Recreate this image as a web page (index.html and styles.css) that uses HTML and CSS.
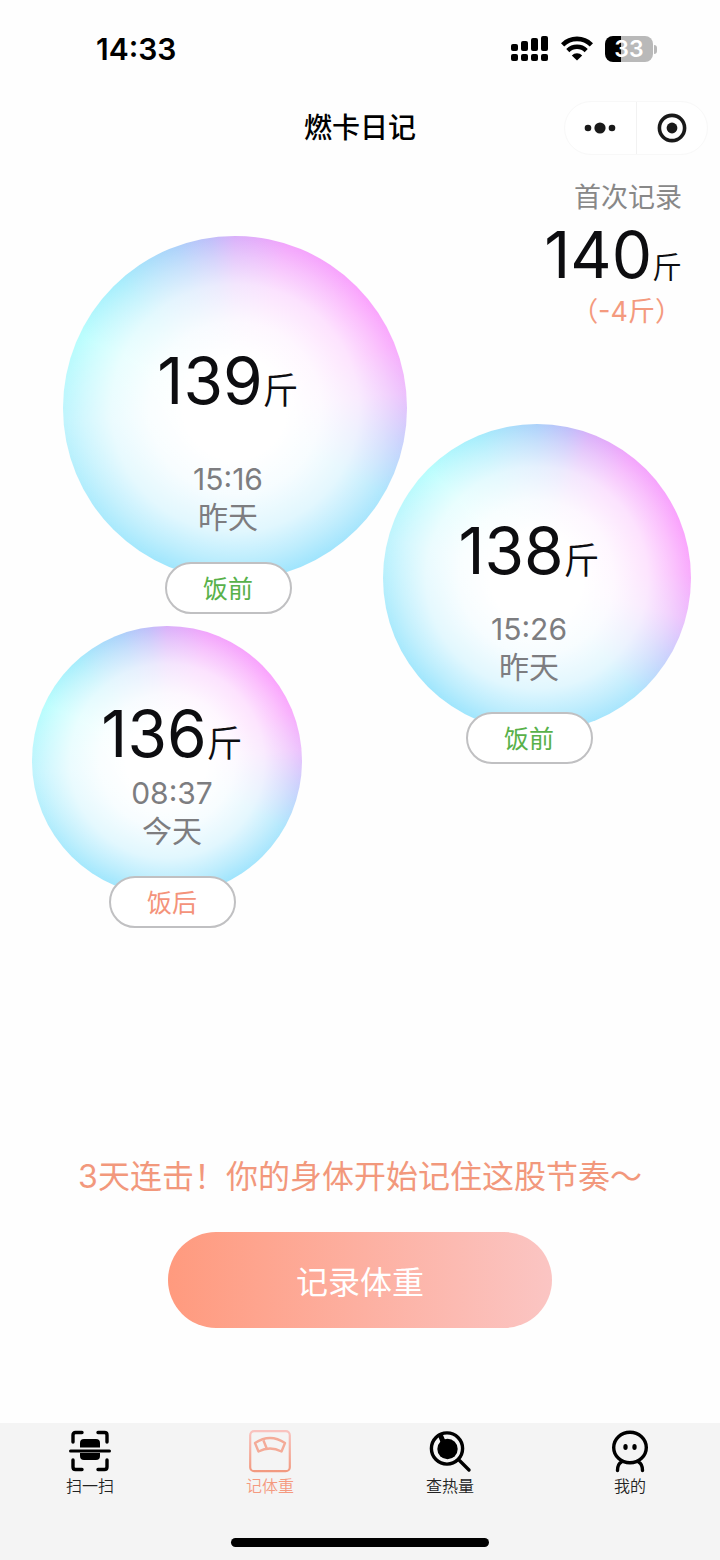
FILE: index.html
```html
<!DOCTYPE html>
<html lang="zh-CN">
<head>
    <meta charset="UTF-8">
    <meta name="viewport" content="width=device-width, initial-scale=1.0">
    <title>燃卡日记</title>
    <link rel="stylesheet" href="styles.css">
</head>
<body>

    <div class="status-bar">
        <span class="clock">14:33</span>
        <div class="status-icons">
            <svg width="38" height="26" viewBox="0 0 38 26">
                <rect x="0" y="8" width="7" height="7" rx="2"/>
                <rect x="10" y="5" width="7" height="10" rx="2"/>
                <rect x="20" y="2" width="7" height="13" rx="2"/>
                <rect x="30" y="0" width="7" height="15" rx="2"/>
                <rect x="0" y="18" width="7" height="7" rx="2"/>
                <rect x="10" y="18" width="7" height="7" rx="2"/>
                <rect x="20" y="18" width="7" height="7" rx="2"/>
                <rect x="30" y="18" width="7" height="7" rx="2"/>
            </svg>
            <svg width="32" height="26" viewBox="0 0 32 26">
                <path d="M1.600 8.800a20.500 20.500 0 0 1 28.800 0" fill="none" stroke="#000" stroke-width="4.6"/>
                <path d="M6.800 14.600a13 13 0 0 1 18.400 0" fill="none" stroke="#000" stroke-width="4.4"/>
                <path d="M16 24.400l-5.200-5a7.400 7.400 0 0 1 10.400 0z"/>
            </svg>
            <div class="battery"><span>33</span></div>
        </div>
    </div>

    <header class="nav-bar">
        <h1>燃卡日记</h1>
        <div class="capsule">
            <button type="button" aria-label="更多">
                <svg width="32" height="30" viewBox="0 0 32 30">
                    <circle cx="4" cy="15" r="3.3"/>
                    <circle cx="16" cy="15" r="5.6"/>
                    <circle cx="28" cy="15" r="3.3"/>
                </svg>
            </button>
            <button type="button" aria-label="关闭">
                <svg width="30" height="30" viewBox="0 0 30 30">
                    <circle cx="15" cy="15" r="12.6" fill="none" stroke="#191919" stroke-width="3.6"/>
                    <circle cx="15" cy="15" r="5.4"/>
                </svg>
            </button>
        </div>
    </header>

    <main class="board">
        <section class="first-record">
            <p class="label">首次记录</p>
            <p class="weight">140<small>斤</small></p>
            <p class="diff">（-4斤）</p>
        </section>

        <article class="entry large">
            <div class="ball"></div>
            <p class="weight">139<small>斤</small></p>
            <p class="when">15:16<br>昨天</p>
            <span class="tag before">饭前</span>
        </article>
        <article class="entry medium">
            <div class="ball"></div>
            <p class="weight">138<small>斤</small></p>
            <p class="when">15:26<br>昨天</p>
            <span class="tag before">饭前</span>
        </article>
        <article class="entry small">
            <div class="ball"></div>
            <p class="weight">136<small>斤</small></p>
            <p class="when">08:37<br>今天</p>
            <span class="tag after">饭后</span>
        </article>
    </main>

    <section class="action">
        <p>3天连击！你的身体开始记住这股节奏～</p>
        <button type="button" class="record-btn">记录体重</button>
    </section>

    <footer class="tab-bar">
        <nav>
            <a href="#scan">
                <svg width="44" height="44" viewBox="0 0 44 44">
                    <g fill="none" stroke="#000" stroke-width="3.4" stroke-linecap="round" stroke-linejoin="round">
                        <path d="M5 13V6q0-2.500 2.500-2.500H14M30 3.500h6.500Q39 3.500 39 6v7M5 31v7q0 2.500 2.500 2.500H14M30 40.500h6.500Q39 40.500 39 38v-7"/>
                        <path d="M2.500 22h39" stroke-width="3"/>
                    </g>
                    <path d="M12 18.400V14q0-4 4-4h12q4 0 4 4v4.400zM12 24h20v3q0 4-4 4H16q-4 0-4-4z"/>
                </svg>
                <span>扫一扫</span>
            </a>
            <a href="#weight" class="active">
                <svg width="44" height="44" viewBox="0 0 44 44">
                    <defs>
                        <linearGradient id="scale" x1="0" y1="0" x2="0" y2="1">
                            <stop offset="0" stop-color="#f9c3bf"/>
                            <stop offset="1" stop-color="#f29a80"/>
                        </linearGradient>
                    </defs>
                    <rect x="2.2" y="2.2" width="39.6" height="40" rx="4" fill="none" stroke="url(#scale)" stroke-width="2.2"/>
                    <path d="M7 14Q22 4 37 14L33.500 22.500Q22 16.500 10.500 22.500zM15.500 11.500l3 7.500" fill="none" stroke="#f4ab98" stroke-width="2.4" stroke-linejoin="round"/>
                </svg>
                <span>记体重</span>
            </a>
            <a href="#calorie">
                <svg width="44" height="44" viewBox="0 0 44 44">
                    <circle cx="19" cy="19.5" r="15.6" fill="none" stroke="#000" stroke-width="3.4"/>
                    <circle cx="19.5" cy="20" r="10.2"/>
                    <path d="M12.500 6.500l2.500 6" fill="none" stroke="#000" stroke-width="5" stroke-linecap="round"/>
                    <path d="M31.500 31.500l9.500 9.500" fill="none" stroke="#000" stroke-width="3.4" stroke-linecap="round"/>
                </svg>
                <span>查热量</span>
            </a>
            <a href="#me">
                <svg width="44" height="44" viewBox="0 0 44 44">
                    <g fill="none" stroke="#000" stroke-width="3.4" stroke-linecap="round">
                        <ellipse cx="22" cy="18.5" rx="16.3" ry="15.3"/>
                        <path d="M13.500 33Q9.500 35 9.500 41.500M30.500 33Q34.500 35 34.500 41.500"/>
                    </g>
                    <ellipse cx="17.5" cy="18" rx="2.2" ry="3"/>
                    <ellipse cx="26.5" cy="18" rx="2.2" ry="3"/>
                </svg>
                <span>我的</span>
            </a>
        </nav>
        <div class="home-indicator"></div>
    </footer>

</body>
</html>
```

FILE: styles.css
```css
* {
    box-sizing: border-box;
}
body {
    margin: 0;
    min-height: 100vh;
    display: flex;
    flex-direction: column;
    background-color: #fefefe;
    color: #0d0d10;
    font-family: Inter, "Noto Sans CJK SC", sans-serif;
}
h1, p {
    margin: 0;
    font-weight: normal;
}
button {
    padding: 0;
    border: none;
    background: none;
    font-family: inherit;
    cursor: pointer;
}

.status-bar {
    height: 98px;
    padding: 0 67px 0 96px;
    display: flex;
    justify-content: space-between;
    align-items: center;
}
.clock {
    font-size: 30px;
    font-weight: 600;
    color: #000;
}
.status-icons {
    display: flex;
    align-items: center;
    gap: 12px;
}
.battery {
    position: relative;
    width: 48px;
    height: 26px;
    border-radius: 8px;
    background: linear-gradient(to right, #000 33%, #b9b9b9 33%);
    color: #fff;
    font-size: 23px;
    font-weight: 600;
    line-height: 26px;
    text-align: center;
}
.battery::after {
    content: "";
    position: absolute;
    right: -4px;
    top: 9px;
    width: 3px;
    height: 9px;
    border-radius: 0 3px 3px 0;
    background-color: #b9b9b9;
}

.nav-bar {
    height: 60px;
    padding: 0 12px;
    display: grid;
    grid-template-columns: 1fr auto 1fr;
    align-items: center;
}
.nav-bar h1 {
    grid-column: 2;
    font-size: 28px;
    font-weight: 500;
    line-height: 40px;
    color: #000;
}
.capsule {
    justify-self: end;
    width: 144px;
    height: 54px;
    display: flex;
    border: 1px solid #f8f8f8;
    border-radius: 27px;
    background-color: #fff;
}
.capsule button {
    flex: 1;
    display: flex;
    justify-content: center;
    align-items: center;
}
.capsule button + button {
    border-left: 1px solid #f2f2f2;
}
.capsule svg {
    fill: #191919;
}

.board {
    position: relative;
    flex: 1;
}
.weight {
    font-size: 64px;
    line-height: 76px;
    white-space: nowrap;
}
.weight small {
    font-size: 36px;
    font-weight: 350;
    line-height: 1;
}
.first-record {
    padding: 21px 38px 0 0;
    text-align: right;
    font-size: 27px;
    line-height: 38px;
}
.first-record .weight small {
    font-size: 30px;
}
.label {
    color: #888;
}
.diff {
    color: #f49a7e;
}

.entry {
    position: absolute;
    display: flex;
    flex-direction: column;
    align-items: center;
    width: 144px;
}
.entry.large {
    left: 156px;
    top: 185px;
    gap: 41px;
}
.entry.medium {
    left: 457px;
    top: 355px;
    gap: 21px;
}
.entry.small {
    left: 100px;
    top: 538px;
    gap: 2px;
}
.entry .weight, .when, .tag {
    position: relative;
}
.ball {
    position: absolute;
    border-radius: 50%;
    background:
        radial-gradient(circle closest-side, #fff 30%, rgba(255, 255, 255, 0.93) 50%, rgba(255, 255, 255, 0.75) 72%, rgba(255, 255, 255, 0.45) 88%, rgba(255, 255, 255, 0.2) 100%),
        conic-gradient(from var(--spin), #d09cf8, #f08efb 18deg, #f98cfc 50deg, #f796fc 68deg, #e8b0fc 85deg, #c0c4fc 100deg, #98e0fc 120deg, #88defc 150deg, #88e0fc 205deg, #98e6fc 235deg, #b0f1fd 265deg, #a6fdfd 295deg, #90e8fb 318deg, #98c6f9 340deg, #b0aef8 352deg, #d09cf8);
}
.large .ball {
    --spin: 0deg;
    left: -93px;
    top: -107px;
    width: 344px;
    height: 344px;
}
.medium .ball {
    --spin: 20deg;
    left: -74px;
    top: -89px;
    width: 308px;
    height: 308px;
}
.small .ball {
    --spin: 0deg;
    left: -68px;
    top: -70px;
    width: 270px;
    height: 270px;
}
.when {
    font-size: 30px;
    line-height: 38px;
    text-align: center;
    color: #7d7d80;
}
.tag {
    width: 127px;
    height: 52px;
    border: 2px solid #c0c0c2;
    border-radius: 26px;
    background-color: #fff;
    font-size: 25px;
    line-height: 50px;
    text-align: center;
}
.large .tag {
    margin-top: -15px;
}
.medium .tag {
    margin-top: 5px;
}
.small .tag {
    margin-top: 24px;
}
.before {
    color: #58b14a;
}
.after {
    color: #f4937a;
}

.action {
    display: flex;
    flex-direction: column;
    align-items: center;
    gap: 31px;
    padding-bottom: 95px;
    color: #f2987c;
    font-size: 32px;
    line-height: 48px;
}
.record-btn {
    width: 384px;
    height: 96px;
    border-radius: 48px;
    background: linear-gradient(to right, #ff9a7e, #fbc5c3);
    color: #fff;
    font-size: 32px;
}

.tab-bar {
    height: 137px;
    padding: 6px 0 13px;
    display: flex;
    flex-direction: column;
    justify-content: space-between;
    align-items: center;
    background-color: #f4f4f4;
}
.tab-bar nav {
    width: 100%;
    display: flex;
}
.tab-bar a {
    flex: 1;
    display: flex;
    flex-direction: column;
    align-items: center;
    gap: 1px;
    color: #222;
    font-size: 16px;
    font-weight: 350;
    line-height: 24px;
    text-decoration: none;
}
.tab-bar a.active {
    color: #f49a80;
}
.home-indicator {
    width: 258px;
    height: 9px;
    border-radius: 5px;
    background-color: #000;
}
```
